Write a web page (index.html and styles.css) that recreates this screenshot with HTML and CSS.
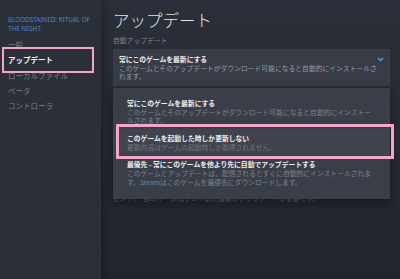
FILE: index.html
```html
<!DOCTYPE html>
<html lang="ja">
<head>
    <meta charset="UTF-8">
    <title>アップデート</title>
    <link rel="stylesheet" href="styles.css">
</head>
<body>
    <div class="app">
        <nav class="sidebar">
            <div class="game">Bloodstained: Ritual of the Night</div>
            <ul class="nav">
                <li>一般</li>
                <li class="active">アップデート</li>
                <li>ローカルファイル</li>
                <li>ベータ</li>
                <li>コントローラ</li>
            </ul>
        </nav>

        <main class="content">
            <h1>アップデート</h1>
            <div class="label">自動アップデート</div>

            <div class="select">
                <div class="select-box">
                    <div class="opt-title">常にこのゲームを最新にする</div>
                    <div class="opt-desc">このゲームとそのアップデートがダウンロード可能になると自動的にインストールされます。</div>
                    <svg class="chevron" width="7" height="5" viewBox="0 0 7 5">
                        <path d="M1 1 L3.5 3.5 L6 1" fill="none" stroke="#4da3e6" stroke-width="1.3"/>
                    </svg>
                </div>

                <div class="menu">
                    <div class="item">
                        <div class="opt-title">常にこのゲームを最新にする</div>
                        <div class="opt-desc">このゲームとそのアップデートがダウンロード可能になると自動的にインストールされます。</div>
                    </div>
                    <div class="item hover">
                        <div class="opt-title">このゲームを起動した時しか更新しない</div>
                        <div class="opt-desc">更新内容はゲームの起動時しか取得されません。</div>
                    </div>
                    <div class="item">
                        <div class="opt-title">最優先 - 常にこのゲームを他より先に自動でアップデートする</div>
                        <div class="opt-desc">このゲームとアップデートは、配信されるとすぐに自動的にインストールされます。Steamはこのゲームを最優先にダウンロードします。</div>
                    </div>
                </div>
            </div>

            <div class="hint">ヒント: 一部のゲームはプレイ前に最新のアップデートが必要です。</div>
        </main>
    </div>
</body>
</html>
```

FILE: styles.css
```css
* {
    box-sizing: border-box;
}
body {
    margin: 0;
    width: 400px;
    height: 279px;
    overflow: hidden;
    background: #252830;
    font-family: "Noto Sans CJK JP", "Noto Sans", sans-serif;
}
.app {
    display: flex;
    height: 279px;
}

/* サイドバー */
.sidebar {
    width: 101px;
    flex-shrink: 0;
    background: #2b2f38;
    padding: 15px 6px 0 8px;
}
.game {
    font-family: "Noto Sans", sans-serif;
    font-size: 6.3px;
    line-height: 9px;
    text-transform: uppercase;
    color: #4a88c8;
}
.nav {
    list-style: none;
    margin: 4px 0 0;
    padding: 0;
}
.nav li {
    position: relative;
    height: 15.3px;
    line-height: 15.3px;
    font-size: 7.5px;
    color: #7b818a;
}
.nav li.active {
    color: #f2f2f2;
    font-weight: bold;
}
.nav li.active::after {
    content: "";
    position: absolute;
    left: -6px;
    width: 88px;
    top: -5px;
    bottom: -5.5px;
    border: 2.5px solid #f3a6c9;
}

/* メイン */
.content {
    flex: 1;
    padding: 10px 10px 0 12px;
    background: linear-gradient(#2b2f39, #22252c);
    box-shadow: inset 9px 0 8px -6px rgba(0, 0, 0, 0.25);
}
h1 {
    margin: 0;
    font-size: 16.5px;
    line-height: 20px;
    font-weight: 300;
    color: #e4e4e4;
}
.label {
    margin-top: 6px;
    font-size: 6.8px;
    line-height: 8.5px;
    color: #80868f;
}
.select {
    position: relative;
    margin-top: 4px;
}
.select-box {
    position: relative;
    background: #383c46;
    padding: 6px 10px 5px 6px;
    border-bottom: 2px solid #2a2d35;
}
.chevron {
    position: absolute;
    right: 6px;
    top: 8px;
}
.opt-title {
    font-size: 6.8px;
    line-height: 9px;
    font-weight: bold;
    color: #eeeeee;
}
.opt-desc {
    font-size: 6.8px;
    line-height: 8.5px;
    color: #959ba3;
}

/* ドロップダウン */
.menu {
    position: absolute;
    top: 100%;
    left: 0;
    right: 0;
    background: #3a3e49;
    padding: 6px 0 9px;
    box-shadow: 0 4px 10px rgba(0, 0, 0, 0.45);
    z-index: 2;
}
.item {
    position: relative;
    padding: 5px 15px 4px 14px;
}
.item .opt-desc {
    color: #7d838c;
}
.item.hover {
    background: #40444f;
}
.item.hover .opt-desc {
    color: #6f757e;
}
.item.hover::after {
    content: "";
    position: absolute;
    left: 3px;
    right: -4px;
    top: -4.5px;
    bottom: -4px;
    border: 3px solid #f3a6c9;
}

/* メニューの下に隠れたヒント */
.hint {
    margin-top: 106px;
    font-size: 6.8px;
    line-height: 8.5px;
    color: #6d737c;
}
```
